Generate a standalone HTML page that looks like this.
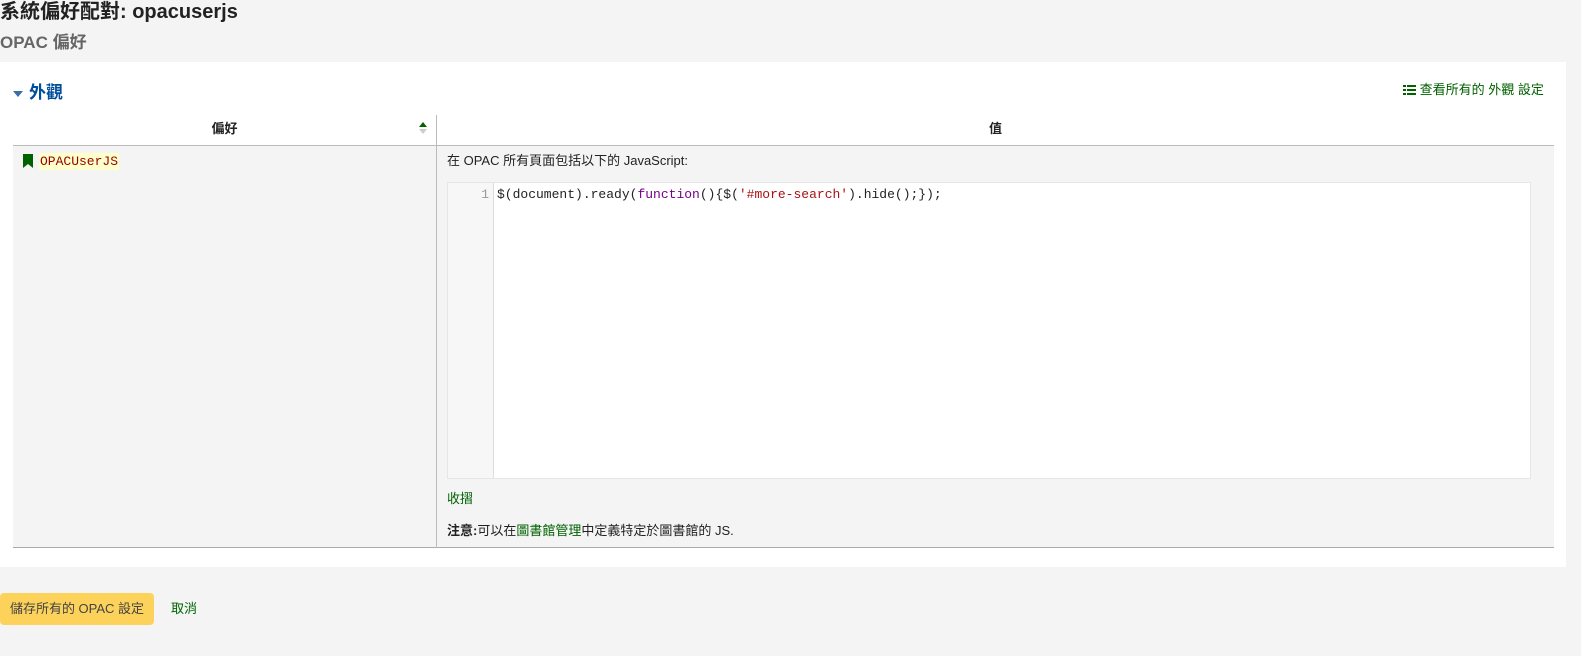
<!DOCTYPE html>
<html><head><meta charset="utf-8"><style>
body{margin:0;background:#f3f4f3;font-family:"Liberation Sans","DejaVu Sans","Noto Sans CJK TC",sans-serif;width:1581px;height:656px;overflow:hidden;position:relative;color:#222}
.a{position:absolute}
h1{position:absolute;left:0;top:0;margin:0;font-size:20px;font-weight:bold;line-height:24px;color:#222}
h2{position:absolute;left:0;top:32px;margin:0;font-size:17px;font-weight:bold;color:#666;line-height:22px}
.panel{position:absolute;left:0;top:62px;width:1566px;height:505px;background:#fff}
.green{color:#006100}
code{font-family:"Liberation Mono","DejaVu Sans Mono",monospace;font-size:13px}
</style></head><body>
<h1>系統偏好配對: opacuserjs</h1>
<h2>OPAC 偏好</h2>
<div class="panel">
 <div class="a" style="left:13px;top:21px;font-size:17px;font-weight:bold;color:#004d99;line-height:20px"><span style="display:inline-block;width:0;height:0;border-left:5px solid transparent;border-right:5px solid transparent;border-top:6px solid #3a6ea5;vertical-align:middle;margin-right:6px"></span>外觀</div>
 <div class="a green" style="left:1403px;top:20px;font-size:13px;line-height:16px"><svg width="13" height="10" style="vertical-align:-1px"><rect x="0" y="0" width="3" height="2" fill="#006100"/><rect x="0" y="4" width="3" height="2" fill="#006100"/><rect x="0" y="8" width="3" height="2" fill="#006100"/><rect x="4" y="0" width="9" height="2" fill="#006100"/><rect x="4" y="4" width="9" height="2" fill="#006100"/><rect x="4" y="8" width="9" height="2" fill="#006100"/></svg> 查看所有的 外觀 設定</div>
 <!-- table -->
 <div class="a" style="left:13px;top:53px;width:1541px;height:30px;border-bottom:2px solid #bbb"></div>
 <div class="a" style="left:13px;top:84px;width:1541px;height:401px;background:#f3f4f3;border-bottom:1px solid #aaa"></div>
 <div class="a" style="left:436px;top:53px;width:1px;height:433px;background:#bbb"></div>
 <div class="a" style="left:13px;top:58px;width:423px;text-align:center;font-size:13px;font-weight:bold;line-height:18px">偏好</div>
 <div class="a" style="left:419px;top:60px;width:0;height:0;border-left:4px solid transparent;border-right:4px solid transparent;border-bottom:5px solid #006100"></div>
 <div class="a" style="left:419px;top:67px;width:0;height:0;border-left:4px solid transparent;border-right:4px solid transparent;border-top:5px solid #ccc"></div>
 <div class="a" style="left:437px;top:58px;width:1117px;text-align:center;font-size:13px;font-weight:bold;line-height:18px">值</div>
 <svg class="a" style="left:23px;top:92px" width="10" height="14"><path d="M0 0H10V14L5 10L0 14Z" fill="#006100"/></svg>
 <div class="a" style="left:39px;top:91px;background:#ffffcc;color:#990000;line-height:16px;padding:0 1px"><code>OPACUserJS</code></div>
 <div class="a" style="left:447px;top:91px;font-size:13px;line-height:16px">在 OPAC 所有頁面包括以下的 JavaScript:</div>
 <div class="a" style="left:447px;top:120px;width:1082px;height:295px;background:#fff;border:1px solid #e6e6e6"></div>
 <div class="a" style="left:448px;top:121px;width:45px;height:295px;background:#f7f7f7;border-right:1px solid #ddd"></div>
 <div class="a" style="left:448px;top:124px;width:41px;text-align:right;color:#999;line-height:16px"><code>1</code></div>
 <div class="a" style="left:497px;top:124px;line-height:16px;white-space:pre"><code>$(document).ready(<span style="color:#770088">function</span>(){$(<span style="color:#aa1111">'#more-search'</span>).hide();});</code></div>
 <div class="a green" style="left:447px;top:429px;font-size:13px;line-height:16px">收摺</div>
 <div class="a" style="left:447px;top:461px;font-size:13px;line-height:16px"><b>注意:</b>可以在<span class="green">圖書館管理</span>中定義特定於圖書館的 JS.</div>
</div>
<div class="a" style="left:0;top:593px;width:154px;height:32px;background:#fcd25b;border-radius:4px;font-size:13px;line-height:32px;text-align:center;color:#444">儲存所有的 OPAC 設定</div>
<div class="a green" style="left:171px;top:601px;font-size:13px;line-height:16px">取消</div>
</body></html>
